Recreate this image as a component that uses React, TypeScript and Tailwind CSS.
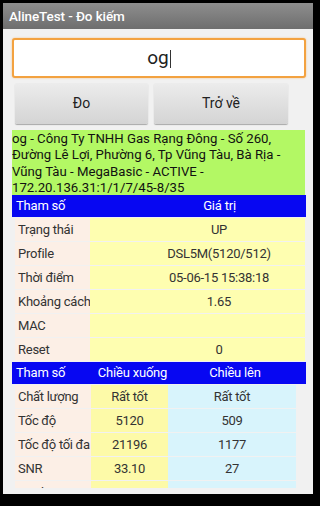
import React from "react";

const t1 = [
  ["Trạng thái", "UP"],
  ["Profile", "DSL5M(5120/512)"],
  ["Thời điểm", "05-06-15 15:38:18"],
  ["Khoảng cách", "1.65"],
  ["MAC", ""],
  ["Reset", "0"],
];

const t2 = [
  ["Chất lượng", "Rất tốt", "Rất tốt"],
  ["Tốc độ", "5120", "509"],
  ["Tốc độ tối đa", "21196", "1177"],
  ["SNR", "33.10", "27"],
  ["Suy hao", "21.70", "16.50"],
];

export default function App() {
  return (
    <div
      className="w-[320px] h-[506px] bg-black pt-[3px] pl-[3px] overflow-hidden"
      style={{ fontFamily: "Roboto, 'Noto Sans', sans-serif" }}
    >
      <div className="w-[310px] h-[491px] flex flex-col bg-[#f1f1f1]">
        <div className="h-[26px] shrink-0 bg-gradient-to-b from-[#8e8e8e] to-[#6e6e6e] flex items-center pl-[6px] text-white text-[13.5px] font-medium tracking-[-0.1px]">
          AlineTest - Đo kiếm
        </div>
        <div className="flex-1 overflow-hidden flex flex-col">
          <div className="ml-[9px] mt-[9px] w-[294px] h-[40px] shrink-0 rounded-[3px] border-2 border-[#f3a240] bg-white flex items-center justify-center text-[19px] text-[#222] shadow-[0_0_2px_#f6c080]">
            <span>og</span>
            <span className="inline-block w-[1px] h-[18px] bg-[#333] ml-[1px] mt-[2px]" />
          </div>
          <div className="flex gap-[6px] ml-[12px] mt-[5px] shrink-0">
            <div className="w-[133px] h-[41px] rounded-[2px] bg-gradient-to-b from-[#ececec] to-[#d4d4d4] shadow-[0_1px_1px_#a8a8a8] flex items-center justify-center text-[14px] text-[#222]">
              Đo
            </div>
            <div className="w-[134px] h-[41px] rounded-[2px] bg-gradient-to-b from-[#ececec] to-[#d4d4d4] shadow-[0_1px_1px_#a8a8a8] flex items-center justify-center text-[14px] text-[#222]">
              Trở về
            </div>
          </div>
          <div className="ml-[9px] mt-[6px] w-[293px] h-[65px] shrink-0 bg-[#b3f864] text-[13.2px] leading-[16.3px] text-[#111] pt-[1px] pr-[4px] overflow-hidden">
            og - Công Ty TNHH Gas Rạng Đông - Số 260, Đường Lê Lợi, Phường 6, Tp Vũng Tàu, Bà Rịa - Vũng Tàu - MegaBasic - ACTIVE - 172.20.136.31:1/1/7/45-8/35
          </div>
          <div className="ml-[9px] w-[294px] h-[22px] shrink-0 bg-[#0707f2] flex items-center text-white text-[13px] tracking-[-0.2px]">
            <div className="w-[78px] pl-[4px]">Tham số</div>
            <div className="flex-1 text-center pl-[43px]">Giá trị</div>
          </div>
          {t1.map(([k, v]) => (
            <div key={k} className="ml-[12px] w-[290px] h-[23px] mt-[1px] shrink-0 flex text-[13px] tracking-[-0.25px] text-[#333]">
              <div className="w-[75px] bg-[#fcefe6] pl-[3px] flex items-center whitespace-nowrap">{k}</div>
              <div className="flex-1 bg-[#fefeb0] flex items-center justify-center pl-[43px]">{v}</div>
            </div>
          ))}
          <div className="ml-[9px] mt-[1px] w-[294px] h-[22px] shrink-0 bg-[#0707f2] flex items-center text-white text-[13px] tracking-[-0.2px] whitespace-nowrap">
            <div className="w-[82px] pl-[4px]">Tham số</div>
            <div className="w-[77px] text-center">Chiều xuống</div>
            <div className="w-[128px] text-center">Chiều lên</div>
          </div>
          <div className="flex-1 overflow-hidden mb-[6px]">
            {t2.map(([k, a, b]) => (
              <div key={k} className="ml-[12px] w-[281px] h-[23px] mt-[1px] flex text-[13px] tracking-[-0.3px] text-[#333]">
                <div className="w-[76px] bg-[#fcefe6] pl-[3px] flex items-center whitespace-nowrap">{k}</div>
                <div className="w-[77px] bg-[#fdfaa8] flex items-center justify-center">{a}</div>
                <div className="flex-1 bg-[#d8f4fc] flex items-center justify-center">{b}</div>
              </div>
            ))}
          </div>
        </div>
      </div>
    </div>
  );
}
